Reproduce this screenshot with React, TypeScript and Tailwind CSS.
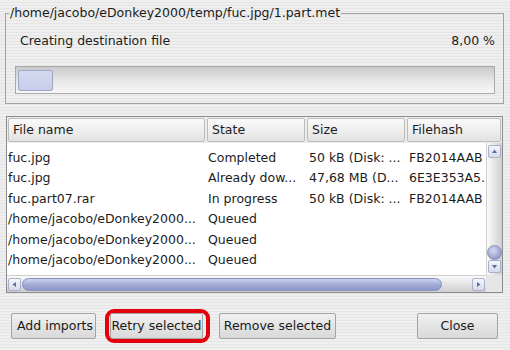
import React from "react";

const rows = [
  { name: "fuc.jpg", state: "Completed", size: "50 kB (Disk: ...", hash: "FB2014AAB" },
  { name: "fuc.jpg", state: "Already dow...", size: "47,68 MB (D...", hash: "6E3E353A5." },
  { name: "fuc.part07.rar", state: "In progress", size: "50 kB (Disk: ...", hash: "FB2014AAB" },
  { name: "/home/jacobo/eDonkey2000...", state: "Queued", size: "", hash: "" },
  { name: "/home/jacobo/eDonkey2000...", state: "Queued", size: "", hash: "" },
  { name: "/home/jacobo/eDonkey2000...", state: "Queued", size: "", hash: "" },
];

function Arrow({ dir }: { dir: "up" | "down" | "left" | "right" }) {
  const pts = {
    up: "1,5 3.5,1.5 6,5",
    down: "1,2 3.5,5.5 6,2",
    left: "5,1 1.5,3.5 5,6",
    right: "2,1 5.5,3.5 2,6",
  }[dir];
  return (
    <div className="flex h-[13px] w-[13px] items-center justify-center rounded-[2px] border border-[#a9b0c8] bg-gradient-to-b from-[#f4f6fb] to-[#d6dbea]">
      <svg width="7" height="7" viewBox="0 0 7 7">
        <polygon points={pts} fill="#5d6d9e" />
      </svg>
    </div>
  );
}

function Button({ children, className = "" }: { children: React.ReactNode; className?: string }) {
  return (
    <div
      className={`flex h-[26px] items-center justify-center overflow-hidden whitespace-nowrap rounded-[2px] border border-[#a4a4a4] bg-gradient-to-b from-[#f0f0f0] to-[#d9d9d9] text-[#1a1a1a] ${className}`}
    >
      {children}
    </div>
  );
}

export default function App() {
  return (
    <div className="h-[350px] w-[510px] overflow-hidden bg-[repeating-linear-gradient(to_bottom,#efefef_0px,#efefef_2px,#e5e5e5_2px,#e5e5e5_3px)] font-['DejaVu_Sans',sans-serif] text-[12.5px] text-[#1c1c1c]">
      <fieldset className="ml-[5px] mt-[4px] h-[100px] w-[499px] border border-[#a2a2a2]">
        <legend className="ml-[3px] px-[1px] leading-[18px]">
          /home/jacobo/eDonkey2000/temp/fuc.jpg/1.part.met
        </legend>
        <div className="mt-[10px] flex justify-between pl-[14px] pr-[8px] leading-[18px]">
          <span>Creating destination file</span>
          <span>8,00 %</span>
        </div>
        <div className="ml-[9px] mt-[16px] flex h-[28px] w-[480px] items-center border border-[#a9a9a9] bg-gradient-to-b from-[#c9c9c9] via-[#e6e6e6] to-[#f7f7f7] px-[2px]">
          <div className="h-[21px] w-[35px] rounded-[2px] border border-[#9ea7c9] bg-gradient-to-b from-[#d4daf0] to-[#c6cdea]" />
        </div>
      </fieldset>

      <div className="ml-[6px] mt-[12px] flex h-[177px] w-[497px] flex-col border border-[#8c8c8c] bg-white">
        <div className="flex h-[26px] items-stretch bg-[#ececec] py-[1px]">
          {[
            { label: "File name", w: "w-[199px]" },
            { label: "State", w: "w-[100px]" },
            { label: "Size", w: "w-[100px]" },
            { label: "Filehash", w: "flex-1" },
          ].map((h) => (
            <div key={h.label} className={`${h.w} px-[1px]`}>
              <div className="flex h-full items-center rounded-[2px] border border-[#bdbdbd] bg-gradient-to-b from-[#fafafa] to-[#e3e3e3] pl-[4px]">
                {h.label}
              </div>
            </div>
          ))}
        </div>
        <div className="flex min-h-0 flex-1">
          <div className="flex-1 overflow-hidden pt-[5px]">
            {rows.map((r, i) => (
              <div key={i} className="flex h-[20.5px] items-center whitespace-nowrap">
                <div className="w-[200px] overflow-hidden pl-[1px]">{r.name}</div>
                <div className="w-[100px] overflow-hidden pl-[1px]">{r.state}</div>
                <div className="w-[100px] overflow-hidden pl-[2px]">{r.size}</div>
                <div className="flex-1 overflow-hidden pl-[2px]">{r.hash}</div>
              </div>
            ))}
          </div>
          <div className="flex w-[16px] flex-col items-center border-l border-[#cfcfcf] bg-gradient-to-r from-[#fbfbfb] to-[#cfcfcf] py-[2px]">
            <Arrow dir="up" />
            <div className="flex-1" />
            <div className="h-[15px] w-[15px] rounded-full border border-[#8590bf] bg-[radial-gradient(circle_at_40%_35%,#d6dbf2,#9ea7d2_60%,#7f89bc)]" />
            <Arrow dir="down" />
          </div>
        </div>
        <div className="flex h-[17px]">
          <div className="flex flex-1 items-center border-t border-[#cfcfcf] bg-gradient-to-b from-[#fbfbfb] to-[#cfcfcf] px-[1px]">
            <Arrow dir="left" />
            <div className="ml-[1px] h-[13px] w-[420px] rounded-full border border-[#8590bf] bg-gradient-to-b from-[#cdd3ee] via-[#a3acd5] to-[#8e98c8]" />
            <div className="flex-1" />
            <Arrow dir="right" />
          </div>
          <div className="w-[16px] bg-[#e6e6e6]" />
        </div>
      </div>

      <div className="mt-[16px] flex items-center">
        <Button className="ml-[11px] w-[85px] justify-start pl-[5px]">Add imports</Button>
        <div className="ml-[9px] flex h-[34px] items-center rounded-[9px] border-[4px] border-[#e3000b] pl-[1px] pr-[3px]">
          <Button className="w-[93px]">Retry selected</Button>
        </div>
        <Button className="ml-[9px] w-[117px]">Remove selected</Button>
        <div className="flex-1" />
        <Button className="mr-[12px] w-[81px]">Close</Button>
      </div>
    </div>
  );
}
